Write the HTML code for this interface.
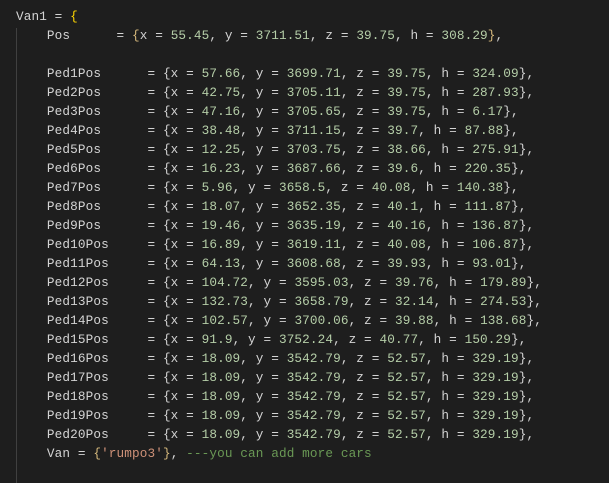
<!DOCTYPE html>
<html><head><style>
html,body{margin:0;padding:0;background:#1e1e1e;width:609px;height:483px;overflow:hidden}
pre{margin:0;position:absolute;left:16px;top:7px;font-family:"Liberation Mono",monospace;font-size:12.7px;letter-spacing:0.12px;line-height:19px;color:#d4d4d4}
.n{color:#b5cea8}.g{color:#ffd700}.s{color:#ce9178}.c{color:#6a9955}.b{color:#d7ba7d}
.guide{position:absolute;left:16px;top:28px;width:1px;height:455px;background:#404040}
</style></head><body>
<div class="guide"></div>
<pre>Van1 = <span class="g">{</span>
    Pos      = <span class="b">{</span>x = <span class="n">55.45</span>, y = <span class="n">3711.51</span>, z = <span class="n">39.75</span>, h = <span class="n">308.29</span><span class="b">}</span>,

    Ped1Pos      = {x = <span class="n">57.66</span>, y = <span class="n">3699.71</span>, z = <span class="n">39.75</span>, h = <span class="n">324.09</span>},
    Ped2Pos      = {x = <span class="n">42.75</span>, y = <span class="n">3705.11</span>, z = <span class="n">39.75</span>, h = <span class="n">287.93</span>},
    Ped3Pos      = {x = <span class="n">47.16</span>, y = <span class="n">3705.65</span>, z = <span class="n">39.75</span>, h = <span class="n">6.17</span>},
    Ped4Pos      = {x = <span class="n">38.48</span>, y = <span class="n">3711.15</span>, z = <span class="n">39.7</span>, h = <span class="n">87.88</span>},
    Ped5Pos      = {x = <span class="n">12.25</span>, y = <span class="n">3703.75</span>, z = <span class="n">38.66</span>, h = <span class="n">275.91</span>},
    Ped6Pos      = {x = <span class="n">16.23</span>, y = <span class="n">3687.66</span>, z = <span class="n">39.6</span>, h = <span class="n">220.35</span>},
    Ped7Pos      = {x = <span class="n">5.96</span>, y = <span class="n">3658.5</span>, z = <span class="n">40.08</span>, h = <span class="n">140.38</span>},
    Ped8Pos      = {x = <span class="n">18.07</span>, y = <span class="n">3652.35</span>, z = <span class="n">40.1</span>, h = <span class="n">111.87</span>},
    Ped9Pos      = {x = <span class="n">19.46</span>, y = <span class="n">3635.19</span>, z = <span class="n">40.16</span>, h = <span class="n">136.87</span>},
    Ped10Pos     = {x = <span class="n">16.89</span>, y = <span class="n">3619.11</span>, z = <span class="n">40.08</span>, h = <span class="n">106.87</span>},
    Ped11Pos     = {x = <span class="n">64.13</span>, y = <span class="n">3608.68</span>, z = <span class="n">39.93</span>, h = <span class="n">93.01</span>},
    Ped12Pos     = {x = <span class="n">104.72</span>, y = <span class="n">3595.03</span>, z = <span class="n">39.76</span>, h = <span class="n">179.89</span>},
    Ped13Pos     = {x = <span class="n">132.73</span>, y = <span class="n">3658.79</span>, z = <span class="n">32.14</span>, h = <span class="n">274.53</span>},
    Ped14Pos     = {x = <span class="n">102.57</span>, y = <span class="n">3700.06</span>, z = <span class="n">39.88</span>, h = <span class="n">138.68</span>},
    Ped15Pos     = {x = <span class="n">91.9</span>, y = <span class="n">3752.24</span>, z = <span class="n">40.77</span>, h = <span class="n">150.29</span>},
    Ped16Pos     = {x = <span class="n">18.09</span>, y = <span class="n">3542.79</span>, z = <span class="n">52.57</span>, h = <span class="n">329.19</span>},
    Ped17Pos     = {x = <span class="n">18.09</span>, y = <span class="n">3542.79</span>, z = <span class="n">52.57</span>, h = <span class="n">329.19</span>},
    Ped18Pos     = {x = <span class="n">18.09</span>, y = <span class="n">3542.79</span>, z = <span class="n">52.57</span>, h = <span class="n">329.19</span>},
    Ped19Pos     = {x = <span class="n">18.09</span>, y = <span class="n">3542.79</span>, z = <span class="n">52.57</span>, h = <span class="n">329.19</span>},
    Ped20Pos     = {x = <span class="n">18.09</span>, y = <span class="n">3542.79</span>, z = <span class="n">52.57</span>, h = <span class="n">329.19</span>},
    Van = <span class="b">{</span><span class="s">'rumpo3'</span><span class="b">}</span>, <span class="c">---you can add more cars</span>
</pre>
</body></html>
